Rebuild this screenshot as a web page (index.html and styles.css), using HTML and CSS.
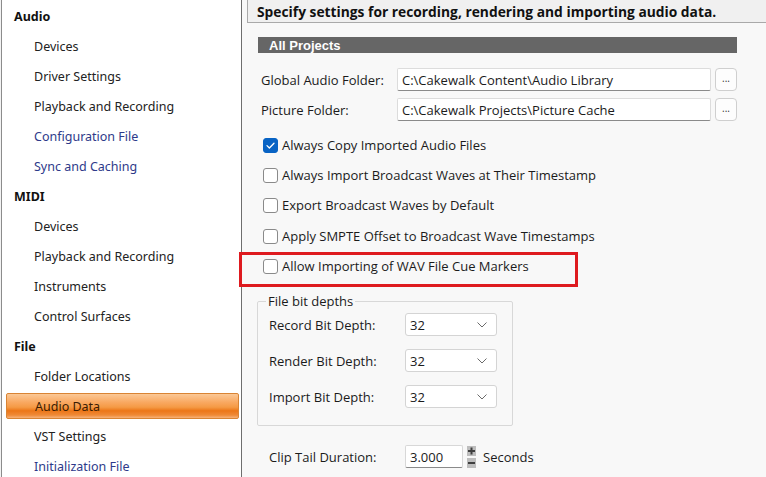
FILE: index.html
```html
<!DOCTYPE html>
<html>
<head>
<meta charset="utf-8">
<link rel="stylesheet" href="styles.css">
</head>
<body>
<div class="app">
  <nav class="sidebar">
    <div class="cat">Audio</div>
    <div class="item">Devices</div>
    <div class="item">Driver Settings</div>
    <div class="item">Playback and Recording</div>
    <div class="item link">Configuration File</div>
    <div class="item link">Sync and Caching</div>
    <div class="cat">MIDI</div>
    <div class="item">Devices</div>
    <div class="item">Playback and Recording</div>
    <div class="item">Instruments</div>
    <div class="item">Control Surfaces</div>
    <div class="cat">File</div>
    <div class="item">Folder Locations</div>
    <div class="item selected"><span class="sel-bar">Audio Data</span></div>
    <div class="item">VST Settings</div>
    <div class="item link">Initialization File</div>
  </nav>
  <main class="main">
    <div class="header">Specify settings for recording, rendering and importing audio data.</div>
    <div class="section-bar">All Projects</div>

    <div class="field-row first">
      <label class="field-label">Global Audio Folder:</label>
      <div class="textbox">C:\Cakewalk Content\Audio Library</div>
      <button class="browse">...</button>
    </div>
    <div class="field-row">
      <label class="field-label">Picture Folder:</label>
      <div class="textbox">C:\Cakewalk Projects\Picture Cache</div>
      <button class="browse">...</button>
    </div>

    <div class="checks">
      <div class="check-row"><span class="box checked"><svg width="15" height="15" viewBox="0 0 15 15"><path d="M4 7.6 L6.4 10 L11 5.2" fill="none" stroke="#fff" stroke-width="1.3" stroke-linecap="round" stroke-linejoin="round"/></svg></span>Always Copy Imported Audio Files</div>
      <div class="check-row"><span class="box"></span>Always Import Broadcast Waves at Their Timestamp</div>
      <div class="check-row"><span class="box"></span>Export Broadcast Waves by Default</div>
      <div class="check-row"><span class="box"></span>Apply SMPTE Offset to Broadcast Wave Timestamps</div>
      <div class="check-row"><span class="box"></span>Allow Importing of WAV File Cue Markers</div>
    </div>

    <fieldset class="group">
      <legend>File bit depths</legend>
      <div class="sel-row">
        <span class="sel-label">Record Bit Depth:</span>
        <div class="combo"><span>32</span><svg width="10" height="6" viewBox="0 0 10 6"><path d="M0.5 0.5 L5 5 L9.5 0.5" fill="none" stroke="#6a6a6a" stroke-width="1"/></svg></div>
      </div>
      <div class="sel-row">
        <span class="sel-label">Render Bit Depth:</span>
        <div class="combo"><span>32</span><svg width="10" height="6" viewBox="0 0 10 6"><path d="M0.5 0.5 L5 5 L9.5 0.5" fill="none" stroke="#6a6a6a" stroke-width="1"/></svg></div>
      </div>
      <div class="sel-row">
        <span class="sel-label">Import Bit Depth:</span>
        <div class="combo"><span>32</span><svg width="10" height="6" viewBox="0 0 10 6"><path d="M0.5 0.5 L5 5 L9.5 0.5" fill="none" stroke="#6a6a6a" stroke-width="1"/></svg></div>
      </div>
    </fieldset>

    <div class="tail-row">
      <span class="sel-label">Clip Tail Duration:</span>
      <div class="spinbox">3.000</div>
      <svg class="spin" width="11" height="24" viewBox="0 0 11 24">
        <rect x="1" y="1" width="9" height="10" fill="#bdbdbd"/>
        <rect x="1" y="13" width="9" height="10" fill="#bdbdbd"/>
        <path d="M5.5 2.5 V9.5 M2 6 H9" stroke="#3f3f3f" stroke-width="2"/>
        <path d="M2 18 H9" stroke="#3f3f3f" stroke-width="2"/>
      </svg>
      <span class="unit">Seconds</span>
    </div>

    <div class="highlight"></div>
  </main>
</div>
</body>
</html>
```
FILE: styles.css
```css
* { box-sizing: border-box; }
html, body { margin: 0; padding: 0; }
body {
  width: 766px;
  height: 477px;
  overflow: hidden;
  background: #f3f3f3;
}
.app {
  display: flex;
  height: 477px;
}
.sidebar {
  width: 241px;
  margin-left: 1px;
  flex: none;
  background: #fff;
  border-left: 1px solid #8c8c8c;
  border-right: 1px solid #6e6e6e;
  padding-top: 1px;
  font-family: "Noto Sans", sans-serif;
  font-size: 12.5px;
  color: #222;
}
.cat, .item {
  height: 30px;
  display: flex;
  align-items: center;
}
.cat {
  padding-left: 12px;
  font-weight: bold;
  color: #111;
}
.item { padding-left: 32px; }
.item.link { color: #2e3a8a; }
.item.selected {
  padding: 2px 2px 2px 4px;
}
.sel-bar {
  flex: 1;
  height: 26px;
  display: flex;
  align-items: center;
  padding-left: 28px;
  color: #3b1c02;
  border: 1px solid #d98434;
  border-radius: 2px;
  background: linear-gradient(to bottom, #fbc896 0%, #f9a860 35%, #f59a45 55%, #ec7618 70%, #ef8a37 88%, #f7b27a 100%);
}
.main {
  flex: 1;
  position: relative;
  background: #f8f8f8;
  padding-left: 5px;
  font-family: "Open Sans", sans-serif;
  font-size: 13px;
  color: #1b1b1b;
}
.header {
  height: 23px;
  background: #f0f0f0;
  border-left: 1px solid #a9a9a9;
  border-bottom: 1px solid #a9a9a9;
  padding-left: 9px;
  display: flex;
  align-items: center;
  font-weight: bold;
  font-size: 13.8px;
  color: #111;
}
.section-bar {
  margin: 14px 0 0 11px;
  width: 479px;
  height: 16px;
  background: #666;
  color: #fff;
  font-family: "Liberation Sans", sans-serif;
  font-weight: bold;
  font-size: 13px;
  padding-left: 11px;
  display: flex;
  align-items: center;
}
.field-row {
  display: flex;
  align-items: center;
  margin: 7px 0 0 14px;
  height: 23px;
}
.field-row.first { margin-top: 15px; }
.field-label { width: 136px; }
.textbox {
  width: 314px;
  height: 23px;
  background: #fff;
  border: 1px solid #dcdcdc;
  border-bottom-color: #8a8a8a;
  border-radius: 2px;
  padding-left: 4px;
  display: flex;
  align-items: center;
}
.browse {
  margin-left: 4px;
  width: 22px;
  height: 23px;
  border: 1px solid #cfcfcf;
  border-radius: 4px;
  background: #fdfdfd;
  font-family: "Open Sans", sans-serif;
  font-size: 10px;
  color: #333;
  padding: 0 0 4px 0;
  line-height: 1;
}
.checks {
  margin: 9px 0 0 16px;
}
.check-row {
  height: 30px;
  display: flex;
  align-items: center;
}
.check-row:nth-child(4), .check-row:nth-child(5) { position: relative; top: 1px; }
.box {
  width: 15px;
  height: 15px;
  border: 1px solid #8a8a8a;
  border-radius: 3px;
  background: #fff;
  margin-right: 4px;
  flex: none;
  display: flex;
}
.box.checked {
  background: #0863c4;
  border-color: #0863c4;
}
.box.checked svg { margin: -1px; }
.group {
  margin: 13px 0 0 10px;
  width: 256px;
  height: 133px;
  padding: 0 0 0 11px;
  border: 1px solid #d8d8d8;
  border-radius: 2px;
}
.group legend {
  padding: 0 2px;
  margin-left: -3px;
  line-height: 16px;
  font-size: 13px;
}
.sel-row {
  display: flex;
  align-items: center;
  height: 23px;
  margin-top: 13px;
}
.sel-row:first-of-type { margin-top: 4px; }
.sel-label { width: 136px; flex: none; }
.combo {
  width: 92px;
  height: 23px;
  background: #fff;
  border: 1px solid #d4d4d4;
  border-radius: 3px;
  display: flex;
  align-items: center;
  justify-content: space-between;
  padding: 0 9px 0 4px;
}
.tail-row {
  display: flex;
  align-items: center;
  height: 23px;
  margin: 19px 0 0 22px;
}
.spinbox {
  width: 58px;
  height: 23px;
  background: #fff;
  border: 1px solid #d8d8d8;
  border-bottom-color: #8a8a8a;
  border-radius: 2px;
  padding-left: 4px;
  display: flex;
  align-items: center;
}
.spin { margin-left: 3px; }
.unit { margin-left: 6px; }
.highlight {
  position: absolute;
  left: -3px;
  top: 252px;
  width: 339px;
  height: 35px;
  border: 3px solid #de1a1f;
}
```
